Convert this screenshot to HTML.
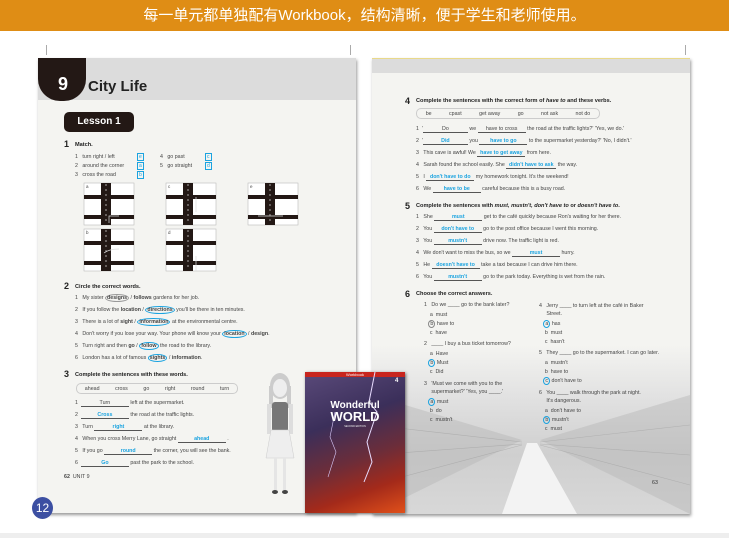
<!DOCTYPE html>
<html><head><meta charset="utf-8"><style>
*{margin:0;padding:0;box-sizing:border-box}
body{width:729px;height:538px;background:#fff;position:relative;overflow:hidden;font-family:"Liberation Sans","Noto Sans CJK SC",sans-serif;color:#333}
.a{position:absolute;white-space:nowrap}
.t{font-size:5.3px;color:#444}
.h{font-size:5.6px;font-weight:bold;color:#222}
.n{font-size:9px;font-weight:bold;color:#222}
.b{color:#1aa3e0;font-weight:bold}
.u{display:inline-block;border-bottom:0.6px solid #555;text-align:center}
.c{border:0.7px solid #1aa3e0;border-radius:50%;padding:0 1px}
.box{border:0.7px solid #1aa3e0;color:#1aa3e0;font-size:5px;padding:0 1px}
.wb{display:flex;justify-content:space-around;align-items:center;font-size:5.3px;color:#444;border:0.6px solid #ccc;border-radius:5px}
</style></head><body>
<div class="a" style="left:0;top:0;width:729px;height:31px;background:#df8d15;color:#fff;font-size:15px;text-align:center;line-height:31px">每一单元都单独配有Workbook，结构清晰，便于学生和老师使用。</div>
<div class="a" style="left:0;top:533px;width:729px;height:5px;background:#eee"></div>

<!-- left page -->
<div class="a" style="left:38px;top:58px;width:318px;height:455px;background:#f4f4f1;box-shadow:1px 2px 3px #999"></div>
<div class="a" style="left:38px;top:58px;width:318px;height:42px;background:#dcdcdc"></div>
<div class="a" style="left:38px;top:58px;width:48px;height:43px;background:#231815;border-radius:0 0 22px 22px"></div>
<div class="a" style="left:58px;top:74px;color:#fff;font-size:18px;font-weight:bold">9</div>
<div class="a" style="left:88px;top:78px;color:#222;font-size:15px;font-weight:bold">City Life</div>
<div class="a" style="left:64px;top:112px;width:70px;height:20px;background:#231815;border-radius:5px;color:#fff;font-size:10px;font-weight:bold;text-align:center;line-height:20px">Lesson 1</div>
<div class="a" style="left:46px;top:45px;width:1px;height:10px;background:#aaa"></div>
<div class="a" style="left:350px;top:45px;width:1px;height:10px;background:#aaa"></div>

<div class="a n" style="left:64px;top:139px">1</div><div class="a h" style="left:75px;top:142px">Match.</div>
<div class="a t" style="left:75px;top:154px">1 &nbsp; turn right / left</div><div class="a box" style="left:137px;top:153px">e</div>
<div class="a t" style="left:75px;top:163px">2 &nbsp; around the corner</div><div class="a box" style="left:137px;top:162px">a</div>
<div class="a t" style="left:75px;top:172px">3 &nbsp; cross the road</div><div class="a box" style="left:137px;top:171px">b</div>
<div class="a t" style="left:160px;top:154px">4 &nbsp; go past</div><div class="a box" style="left:205px;top:153px">c</div>
<div class="a t" style="left:160px;top:163px">5 &nbsp; go straight</div><div class="a box" style="left:205px;top:162px">d</div>

<svg class="a" style="left:0;top:0" width="729" height="538">
<defs><g id="r"><rect width="50" height="42" fill="#fff" stroke="#bbb" stroke-width=".6"/><rect x="17" y="0" width="10" height="42" fill="#231815"/><rect x="0" y="12" width="50" height="4" fill="#231815"/><rect x="0" y="32" width="50" height="4" fill="#231815"/><line x1="22" y1="1" x2="22" y2="41" stroke="#fff" stroke-width=".6" stroke-dasharray="2 3"/></g></defs>
<use href="#r" x="84" y="183"/><use href="#r" x="166" y="183"/><use href="#r" x="248" y="183"/><use href="#r" x="84" y="229"/><use href="#r" x="166" y="229"/>
<path d="M109 223v-7h10" stroke="#ddd" fill="none" stroke-width=".7"/><path d="M196 212v-15" stroke="#ddd" stroke-width=".7"/><path d="M258 216h25" stroke="#ddd" stroke-width=".7"/><path d="M104 253q5-4 15-4" stroke="#ddd" fill="none" stroke-width=".7"/><path d="M196 271v-15" stroke="#ddd" stroke-width=".7"/>
</svg>
<div class="a t" style="left:86px;top:184px;font-size:4.5px">a</div><div class="a t" style="left:168px;top:184px;font-size:4.5px">c</div><div class="a t" style="left:250px;top:184px;font-size:4.5px">e</div><div class="a t" style="left:86px;top:230px;font-size:4.5px">b</div><div class="a t" style="left:168px;top:230px;font-size:4.5px">d</div>

<div class="a n" style="left:64px;top:281px">2</div><div class="a h" style="left:75px;top:284px">Circle the correct words.</div>
<div class="a t" style="left:75px;top:295px">1 &nbsp; My sister <span class="c" style="border-color:#999"><b>designs</b></span> / <b>follows</b> gardens for her job.</div>
<div class="a t" style="left:75px;top:307px">2 &nbsp; If you follow the <b>location</b> / <span class="c"><b>directions</b></span> you'll be there in ten minutes.</div>
<div class="a t" style="left:75px;top:319px">3 &nbsp; There is a lot of <b>sight</b> / <span class="c"><b>information</b></span> at the environmental centre.</div>
<div class="a t" style="left:75px;top:331px">4 &nbsp; Don't worry if you lose your way. Your phone will know your <span class="c"><b>location</b></span> / <b>design</b>.</div>
<div class="a t" style="left:75px;top:343px">5 &nbsp; Turn right and then <b>go</b> / <span class="c"><b>follow</b></span> the road to the library.</div>
<div class="a t" style="left:75px;top:355px">6 &nbsp; London has a lot of famous <span class="c"><b>sights</b></span> / <b>information</b>.</div>

<div class="a n" style="left:64px;top:369px">3</div><div class="a h" style="left:75px;top:372px">Complete the sentences with these words.</div>
<div class="a wb" style="left:76px;top:383px;width:162px;height:11px"><span>ahead</span><span>cross</span><span>go</span><span>right</span><span>round</span><span>turn</span></div>
<div class="a t" style="left:75px;top:400px">1 &nbsp;<span class="u" style="width:48px">Turn</span> left at the supermarket.</div>
<div class="a t" style="left:75px;top:412px">2 &nbsp;<span class="u b" style="width:48px">Cross</span> the road at the traffic lights.</div>
<div class="a t" style="left:75px;top:424px">3 &nbsp; Turn <span class="u b" style="width:48px">right</span> at the library.</div>
<div class="a t" style="left:75px;top:436px">4 &nbsp; When you cross Merry Lane, go straight <span class="u b" style="width:48px">ahead</span> .</div>
<div class="a t" style="left:75px;top:448px">5 &nbsp; If you go <span class="u b" style="width:48px">round</span> the corner, you will see the bank.</div>
<div class="a t" style="left:75px;top:460px">6 &nbsp;<span class="u b" style="width:48px">Go</span> past the park to the school.</div>
<div class="a t" style="left:64px;top:474px"><b>62</b> &nbsp;UNIT 9</div>

<!-- girl -->
<svg class="a" style="left:262px;top:372px" width="40" height="130"><ellipse cx="18" cy="14" rx="10" ry="13" fill="#ccc"/><ellipse cx="18" cy="16" rx="7" ry="9" fill="#eee"/><rect x="7" y="14" width="4" height="22" fill="#ccc"/><rect x="25" y="14" width="4" height="22" fill="#ccc"/><rect x="10" y="30" width="16" height="30" rx="3" fill="#777"/><rect x="5" y="32" width="4" height="30" fill="#ddd"/><rect x="27" y="32" width="4" height="30" fill="#ddd"/><path d="M9 58h18l5 28h-28z" fill="#eee" stroke="#ccc" stroke-width=".5"/><rect x="12" y="86" width="3" height="32" fill="#e5e5e5"/><rect x="21" y="86" width="3" height="32" fill="#e5e5e5"/><ellipse cx="13" cy="120" rx="3" ry="2" fill="#444"/><ellipse cx="23" cy="120" rx="3" ry="2" fill="#444"/></svg>

<!-- right page -->
<div class="a" style="left:372px;top:58px;width:318px;height:456px;background:#f4f4f1;box-shadow:1px 2px 3px #999"></div>
<div class="a" style="left:372px;top:58px;width:318px;height:15px;background:#dcdcdc;border-top:1px solid #e9d98a"></div>
<div class="a" style="left:372px;top:345px;width:318px;height:169px;background:linear-gradient(#f4f4f1,#e2e2e2 30%,#cfcfcf 65%,#d8d8d8);"></div>
<svg class="a" style="left:372px;top:345px" width="318" height="169"><path d="M0 50L150 95 0 169z" fill="#b5b5b5" opacity=".45"/><path d="M318 50L168 95 318 169z" fill="#b5b5b5" opacity=".45"/><path d="M130 169L155 98h10l40 71z" fill="#f3f3f3"/><g stroke="#999" stroke-width=".6" opacity=".5"><path d="M0 80L150 97M0 110L150 99M318 80L168 97M318 110L168 99M0 140L150 100M318 140L168 100"/></g></svg>
<div class="a" style="left:685px;top:45px;width:1px;height:10px;background:#aaa"></div>

<div class="a n" style="left:405px;top:96px">4</div><div class="a h" style="left:416px;top:98px">Complete the sentences with the correct form of <i>have to</i> and these verbs.</div>
<div class="a wb" style="left:416px;top:108px;width:184px;height:11px"><span>be</span><span>cpast</span><span>get away</span><span>go</span><span>not ask</span><span>not do</span></div>
<div class="a t" style="left:416px;top:126px">1 &nbsp;'<span class="u" style="width:45px">Do</span> we <span class="u" style="width:48px">have to cross</span> the road at the traffic lights?' 'Yes, we do.'</div>
<div class="a t" style="left:416px;top:138px">2 &nbsp;'<span class="u b" style="width:45px">Did</span> you <span class="u b" style="width:48px">have to go</span> to the supermarket yesterday?' 'No, I didn't.'</div>
<div class="a t" style="left:416px;top:150px">3 &nbsp; This cave is awful! We <span class="u b" style="width:48px">have to get away</span> from here.</div>
<div class="a t" style="left:416px;top:162px">4 &nbsp; Sarah found the school easily. She <span class="u b" style="width:50px">didn't have to ask</span> the way.</div>
<div class="a t" style="left:416px;top:174px">5 &nbsp; I <span class="u b" style="width:48px">don't have to do</span> my homework tonight. It's the weekend!</div>
<div class="a t" style="left:416px;top:186px">6 &nbsp; We <span class="u b" style="width:48px">have to be</span> careful because this is a busy road.</div>

<div class="a n" style="left:405px;top:201px">5</div><div class="a h" style="left:416px;top:203px">Complete the sentences with <i>must, mustn't, don't have to</i> or <i>doesn't have to</i>.</div>
<div class="a t" style="left:416px;top:214px">1 &nbsp; She <span class="u b" style="width:48px">must</span> get to the café quickly because Ron's waiting for her there.</div>
<div class="a t" style="left:416px;top:226px">2 &nbsp; You <span class="u b" style="width:48px">don't have to</span> go to the post office because I went this morning.</div>
<div class="a t" style="left:416px;top:238px">3 &nbsp; You <span class="u b" style="width:48px">mustn't</span> drive now. The traffic light is red.</div>
<div class="a t" style="left:416px;top:250px">4 &nbsp; We don't want to miss the bus, so we <span class="u b" style="width:48px">must</span> hurry.</div>
<div class="a t" style="left:416px;top:262px">5 &nbsp; He <span class="u b" style="width:48px">doesn't have to</span> take a taxi because I can drive him there.</div>
<div class="a t" style="left:416px;top:274px">6 &nbsp; You <span class="u b" style="width:48px">mustn't</span> go to the park today. Everything is wet from the rain.</div>

<div class="a n" style="left:405px;top:289px">6</div><div class="a h" style="left:416px;top:291px">Choose the correct answers.</div>
<div class="a t" style="left:424px;top:302px">1 &nbsp; Do we ____ go to the bank later?</div>
<div class="a t" style="left:424px;top:311px;line-height:9px">&nbsp;&nbsp;&nbsp;&nbsp;a &nbsp;must<br>&nbsp;&nbsp;&nbsp;<span class="c" style="border-color:#888">b</span> have to<br>&nbsp;&nbsp;&nbsp;&nbsp;c &nbsp;have</div>
<div class="a t" style="left:424px;top:341px">2 &nbsp; ____ I buy a bus ticket tomorrow?</div>
<div class="a t" style="left:424px;top:350px;line-height:9px">&nbsp;&nbsp;&nbsp;&nbsp;a &nbsp;Have<br>&nbsp;&nbsp;&nbsp;<span class="c">b</span> Must<br>&nbsp;&nbsp;&nbsp;&nbsp;c &nbsp;Did</div>
<div class="a t" style="left:424px;top:380px;line-height:8px">3 &nbsp; 'Must we come with you to the<br>&nbsp;&nbsp;&nbsp;&nbsp; supermarket?' 'Yes, you ____.'</div>
<div class="a t" style="left:424px;top:398px;line-height:9px">&nbsp;&nbsp;&nbsp;<span class="c">a</span> must<br>&nbsp;&nbsp;&nbsp;&nbsp;b &nbsp;do<br>&nbsp;&nbsp;&nbsp;&nbsp;c &nbsp;mustn't</div>
<div class="a t" style="left:539px;top:302px;line-height:8px">4 &nbsp; Jerry ____ to turn left at the café in Baker<br>&nbsp;&nbsp;&nbsp;&nbsp; Street.</div>
<div class="a t" style="left:539px;top:320px;line-height:9px">&nbsp;&nbsp;&nbsp;<span class="c">a</span> has<br>&nbsp;&nbsp;&nbsp;&nbsp;b &nbsp;must<br>&nbsp;&nbsp;&nbsp;&nbsp;c &nbsp;hasn't</div>
<div class="a t" style="left:539px;top:350px">5 &nbsp; They ____ go to the supermarket. I can go later.</div>
<div class="a t" style="left:539px;top:359px;line-height:9px">&nbsp;&nbsp;&nbsp;&nbsp;a &nbsp;mustn't<br>&nbsp;&nbsp;&nbsp;&nbsp;b &nbsp;have to<br>&nbsp;&nbsp;&nbsp;<span class="c">c</span> don't have to</div>
<div class="a t" style="left:539px;top:389px;line-height:8px">6 &nbsp; You ____ walk through the park at night.<br>&nbsp;&nbsp;&nbsp;&nbsp; It's dangerous.</div>
<div class="a t" style="left:539px;top:407px;line-height:9px">&nbsp;&nbsp;&nbsp;&nbsp;a &nbsp;don't have to<br>&nbsp;&nbsp;&nbsp;<span class="c">b</span> mustn't<br>&nbsp;&nbsp;&nbsp;&nbsp;c &nbsp;must</div>
<div class="a t" style="left:652px;top:480px;color:#333">63</div>

<!-- book cover -->
<div class="a" style="left:305px;top:372px;width:100px;height:141px;background:linear-gradient(160deg,#5a4a7a,#3b2f5a 35%,#6b2d3a 60%,#a42a1a 80%,#e0501a);box-shadow:1px 1px 3px #666"></div>
<div class="a" style="left:305px;top:372px;width:100px;height:5px;background:#c8251e"></div>
<div class="a" style="left:305px;top:372px;width:100px;text-align:center;color:#fff;font-size:4px">Workbook</div>
<div class="a" style="left:395px;top:378px;color:#fff;font-size:6px;font-weight:bold">4</div>
<svg class="a" style="left:305px;top:372px" width="100" height="141"><path d="M70 0l-6 30 8 10-10 30 5 20-8 20" stroke="#e8dcff" stroke-width="1" fill="none"/><path d="M30 40l-5 25 6 15-8 25" stroke="#d8c8f8" stroke-width=".6" fill="none"/></svg>
<div class="a" style="left:305px;top:400px;width:100px;text-align:center;color:#fff;font-size:10px;font-weight:bold;line-height:11px">Wonderful<br><span style="font-size:13px">WORLD</span></div>
<div class="a" style="left:305px;top:425px;width:100px;text-align:center;color:#eee;font-size:2.5px">SECOND EDITION</div>

<!-- page number -->
<div class="a" style="left:32px;top:497px;width:21px;height:22px;border-radius:50%;background:#3c4fa2;color:#fff;font-size:12px;text-align:center;line-height:22px">12</div>
</body></html>
